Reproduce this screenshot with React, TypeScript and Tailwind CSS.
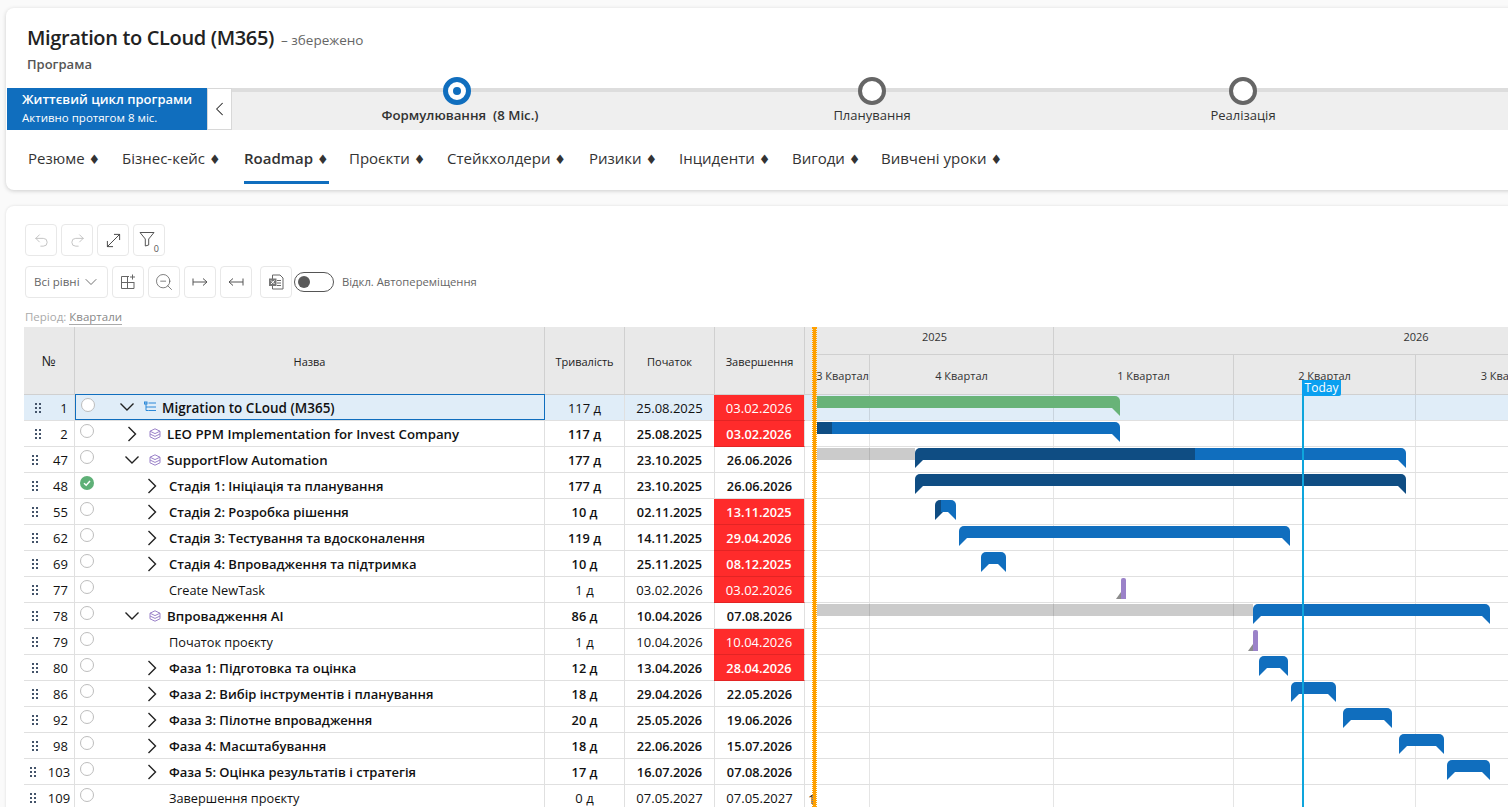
import React from 'react';
import { Undo2, Redo2, MoveDiagonal, ZoomOut, ChevronDown, ChevronLeft } from 'lucide-react';

type Seg = { from: number; to: number; color: string };
type Row = {
  id: number;
  name: string;
  level: 0 | 1 | 2;
  chevron?: 'down' | 'right';
  icon?: 'tree' | 'stack';
  bold: boolean;
  dur: string;
  start: string;
  end: string;
  late?: boolean;
  done?: boolean;
  gray?: [number, number];
  segs?: Seg[];
  cutLeft?: boolean;
  milestone?: number;
};

const BLUE = '#106ebe';
const DARK = '#0f4d83';
const GREEN = '#68b378';
const GANTT_X = 816;

const rows: Row[] = [
  { id: 1, name: 'Migration to CLoud (M365)', level: 0, chevron: 'down', icon: 'tree', bold: false, dur: '117 д', start: '25.08.2025', end: '03.02.2026', late: true, cutLeft: true, segs: [{ from: 817, to: 1120, color: GREEN }] },
  { id: 2, name: 'LEO PPM Implementation for Invest Company', level: 1, chevron: 'right', icon: 'stack', bold: true, dur: '117 д', start: '25.08.2025', end: '03.02.2026', late: true, cutLeft: true, segs: [{ from: 817, to: 832, color: DARK }, { from: 832, to: 1120, color: BLUE }] },
  { id: 47, name: 'SupportFlow Automation', level: 1, chevron: 'down', icon: 'stack', bold: true, dur: '177 д', start: '23.10.2025', end: '26.06.2026', gray: [817, 915], segs: [{ from: 915, to: 1195, color: DARK }, { from: 1195, to: 1406, color: BLUE }] },
  { id: 48, name: 'Стадія 1: Ініціація та планування', level: 2, chevron: 'right', bold: true, dur: '177 д', start: '23.10.2025', end: '26.06.2026', done: true, segs: [{ from: 915, to: 1406, color: DARK }] },
  { id: 55, name: 'Стадія 2: Розробка рішення', level: 2, chevron: 'right', bold: true, dur: '10 д', start: '02.11.2025', end: '13.11.2025', late: true, segs: [{ from: 935, to: 941, color: DARK }, { from: 941, to: 956, color: BLUE }] },
  { id: 62, name: 'Стадія 3: Тестування та вдосконалення', level: 2, chevron: 'right', bold: true, dur: '119 д', start: '14.11.2025', end: '29.04.2026', late: true, segs: [{ from: 959, to: 1290, color: BLUE }] },
  { id: 69, name: 'Стадія 4: Впровадження та підтримка', level: 2, chevron: 'right', bold: true, dur: '10 д', start: '25.11.2025', end: '08.12.2025', late: true, segs: [{ from: 981, to: 1006, color: BLUE }] },
  { id: 77, name: 'Create NewTask', level: 2, bold: false, dur: '1 д', start: '03.02.2026', end: '03.02.2026', late: true, milestone: 1121 },
  { id: 78, name: 'Впровадження AI', level: 1, chevron: 'down', icon: 'stack', bold: true, dur: '86 д', start: '10.04.2026', end: '07.08.2026', gray: [817, 1253], segs: [{ from: 1253, to: 1490, color: BLUE }] },
  { id: 79, name: 'Початок проєкту', level: 2, bold: false, dur: '1 д', start: '10.04.2026', end: '10.04.2026', late: true, milestone: 1253 },
  { id: 80, name: 'Фаза 1: Підготовка та оцінка', level: 2, chevron: 'right', bold: true, dur: '12 д', start: '13.04.2026', end: '28.04.2026', late: true, segs: [{ from: 1259, to: 1288, color: BLUE }] },
  { id: 86, name: 'Фаза 2: Вибір інструментів і планування', level: 2, chevron: 'right', bold: true, dur: '18 д', start: '29.04.2026', end: '22.05.2026', segs: [{ from: 1291, to: 1336, color: BLUE }] },
  { id: 92, name: 'Фаза 3: Пілотне впровадження', level: 2, chevron: 'right', bold: true, dur: '20 д', start: '25.05.2026', end: '19.06.2026', segs: [{ from: 1343, to: 1392, color: BLUE }] },
  { id: 98, name: 'Фаза 4: Масштабування', level: 2, chevron: 'right', bold: true, dur: '18 д', start: '22.06.2026', end: '15.07.2026', segs: [{ from: 1399, to: 1444, color: BLUE }] },
  { id: 103, name: 'Фаза 5: Оцінка результатів і стратегія', level: 2, chevron: 'right', bold: true, dur: '17 д', start: '16.07.2026', end: '07.08.2026', segs: [{ from: 1447, to: 1490, color: BLUE }] },
  { id: 109, name: 'Завершення проєкту', level: 2, bold: false, dur: '0 д', start: '07.05.2027', end: '07.05.2027' },
];

const tabs = [
  { label: 'Резюме', w: 'w-[94px]' },
  { label: 'Бізнес-кейс', w: 'w-[122px]' },
  { label: 'Roadmap', w: 'w-[105px]', active: true },
  { label: 'Проєкти', w: 'w-[98px]' },
  { label: 'Стейкхолдери', w: 'w-[142px]' },
  { label: 'Ризики', w: 'w-[90px]' },
  { label: 'Інциденти', w: 'w-[113px]' },
  { label: 'Вигоди', w: 'w-[89px]' },
  { label: 'Вивчені уроки', w: 'w-[130px]' },
];

const gridLines = [869, 1053, 1233, 1415];

const ToolButton = ({ children, className = '' }: { children: React.ReactNode; className?: string }) => (
  <div className={`w-8 h-8 flex items-center justify-center border border-[#e8e8e8] rounded bg-white ${className}`}>{children}</div>
);

const Grip = () => (
  <svg width="6" height="10" viewBox="0 0 6 10" className="shrink-0">
    {[0, 4, 8].map(y => (
      <g key={y}>
        <rect x="0" y={y} width="2" height="2" fill="#44546a" />
        <rect x="4" y={y} width="2" height="2" fill="#44546a" />
      </g>
    ))}
  </svg>
);

const Chevron = ({ dir }: { dir: 'down' | 'right' }) => (
  <svg width="16" height="16" viewBox="0 0 16 16" fill="none" stroke="#222" strokeWidth="1.4">
    {dir === 'down' ? <polyline points="1.5,4.5 8,11 14.5,4.5" /> : <polyline points="4.5,1 11.5,8 4.5,15" />}
  </svg>
);

const StackIcon = () => (
  <svg width="12" height="12" viewBox="0 0 12 12" fill="none" stroke="#9b82c9" strokeWidth="1" className="shrink-0">
    <path d="M6 .8 11 3.2 6 5.6 1 3.2Z" />
    <path d="M1 3.2V8.8L6 11.2 11 8.8V3.2" />
    <path d="M1 6 6 8.4 11 6" />
  </svg>
);

const TreeIcon = () => (
  <svg width="12" height="12" viewBox="0 0 12 12" fill="none" stroke="#2b88d8" strokeWidth="1" className="shrink-0">
    <rect x="0.5" y="1" width="2.5" height="2" fill="#9cc7ec" />
    <path d="M2 3V9.5H4.5M2 6H4.5M4.5 2H12M4.5 6H12M4.5 9.5H12" />
  </svg>
);

const Status = ({ done }: { done?: boolean }) =>
  done ? (
    <div className="w-[14px] h-[14px] mb-[5px] ml-[5px] rounded-full bg-[#5fb077] flex items-center justify-center shrink-0">
      <svg width="10" height="10" viewBox="0 0 10 10" fill="none" stroke="#fff" strokeWidth="1.5">
        <polyline points="2,5.2 4.2,7.2 8,3" />
      </svg>
    </div>
  ) : (
    <div className="w-[14px] h-[14px] mb-[5px] ml-[5px] rounded-full border border-[#bdbdbd] bg-white shrink-0" />
  );

const Bar = ({ segs, cutLeft }: { segs: Seg[]; cutLeft?: boolean }) => {
  const from = segs[0].from;
  const to = segs[segs.length - 1].to;
  return (
    <div className="absolute top-[1px] h-5" style={{ left: from - GANTT_X, width: to - from }}>
      <div className={`flex h-3 overflow-hidden ${cutLeft ? 'rounded-tr-[5px]' : 'rounded-t-[5px]'}`}>
        {segs.map(s => (
          <div key={s.from} style={{ width: s.to - s.from, backgroundColor: s.color }} />
        ))}
      </div>
      {!cutLeft && (
        <div className="absolute left-0 top-3 w-2 h-2 [clip-path:polygon(0_0,100%_0,0_100%)]" style={{ backgroundColor: segs[0].color }} />
      )}
      <div className="absolute right-0 top-3 w-2 h-2 [clip-path:polygon(0_0,100%_0,100%_100%)]" style={{ backgroundColor: segs[segs.length - 1].color }} />
    </div>
  );
};

const Milestone = ({ x }: { x: number }) => (
  <div className="absolute top-[1px] h-[21px] w-[5px] rounded-t-[2px] bg-[#9b82c9]" style={{ left: x - GANTT_X }}>
    <div className="absolute right-full bottom-0 w-[5px] h-[7px] bg-[#8c8c8c] [clip-path:polygon(100%_0,100%_100%,0_100%)]" />
  </div>
);

const TableRow = ({ row, index }: { row: Row; index: number }) => {
  const selected = index === 0;
  const digits = String(row.id).length;
  const weight = row.bold ? 'font-semibold text-[12.75px]' : 'font-normal';
  const spacer = row.level === 0 ? 24 : row.level === 1 ? 30 : 50;
  const cellBg = selected ? 'bg-[#e0edf8]' : 'bg-white';
  let nameSize = 'text-[12.75px]';
  if (selected) nameSize = 'text-[13.5px] font-semibold';
  else if (row.bold) nameSize = row.level === 1 ? 'text-[13.25px] font-semibold' : 'text-[13px] font-semibold';
  return (
    <div className={`flex h-[26px] border-b border-[#e0e0e0] text-[13px] text-[#111] ${cellBg}`}>
      <div className={`w-[51px] shrink-0 flex items-center justify-center border-r border-[#e0e0e0] ${digits === 1 ? 'gap-[19px] pl-[5px]' : digits === 2 ? 'gap-[15px] pl-[2px]' : 'gap-[12px] pl-[2px]'}`}>
        <Grip />
        <span className="pt-[2px]">{row.id}</span>
      </div>
      <div className={`w-[470px] shrink-0 flex items-center border-r ${selected ? 'border border-[#106ebe] -mt-px' : 'border-[#e0e0e0]'}`}>
        <Status done={row.done} />
        <div className="shrink-0" style={{ width: spacer }} />
        <div className="w-4 h-4 shrink-0">{row.chevron && <Chevron dir={row.chevron} />}</div>
        <div className="ml-[9px] flex items-center gap-[6px] whitespace-nowrap">
          {row.icon === 'tree' && <TreeIcon />}
          {row.icon === 'stack' && <StackIcon />}
          <span className={`pt-[2px] ${nameSize}`}>{row.name}</span>
        </div>
      </div>
      <div className={`w-[80px] shrink-0 flex items-center justify-center border-r border-[#e0e0e0] pt-[2px] ${weight}`}>{row.dur}</div>
      <div className={`w-[90px] shrink-0 flex items-center justify-center border-r border-[#e0e0e0] pt-[2px] ${weight}`}>{row.start}</div>
      <div className={`w-[90px] shrink-0 flex items-center justify-center border-r border-[#e0e0e0] pt-[2px] ${weight} ${row.late ? '-ml-px w-[91px] -mb-px border-b border-b-[#e32424] bg-[#ff2b2b] text-white' : ''}`}>{row.end}</div>
      <div className="w-[11px] shrink-0 pl-[3px] leading-[28px] overflow-hidden">{row.id === 109 ? '1' : ''}</div>
    </div>
  );
};

const GanttRow = ({ row, index }: { row: Row; index: number }) => (
  <div className={`relative h-[26px] border-b border-[#e0e0e0] ${index === 0 ? 'bg-[#e0edf8]' : 'bg-white'}`}>
    {row.gray && (
      <div className="absolute top-[1px] h-3 bg-[#cbcbcb]" style={{ left: row.gray[0] - GANTT_X, width: row.gray[1] - row.gray[0] }} />
    )}
    {gridLines.map(x => (
      <div key={x} className="absolute top-0 bottom-0 w-px bg-black/10" style={{ left: x - GANTT_X }} />
    ))}
    {row.segs && <Bar segs={row.segs} cutLeft={row.cutLeft} />}
    {row.milestone && <Milestone x={row.milestone} />}
  </div>
);

export default function App() {
  return (
    <div className="h-[807px] w-[1508px] overflow-hidden bg-[#fafafa] pl-[6px] pt-2 font-['Open_Sans',sans-serif] text-[#222]">
      <div className="w-[1560px] h-[182px] bg-white rounded-lg shadow-[0_1px_4px_rgba(0,0,0,0.18)]">
        <div className="pl-[21px] pt-[16px] h-[80px]">
          <div className="flex items-baseline h-[27px]">
            <span className="text-[20px] font-semibold text-[#222] tracking-[-0.35px] leading-[27px]">Migration to CLoud (M365)</span>
            <span className="ml-[7px] text-[13.5px] text-[#666]">– збережено</span>
          </div>
          <div className="mt-[4px] text-[13px] font-semibold text-[#555]">Програма</div>
        </div>
        <div className="flex h-[42px] ml-px">
          <div className="w-[200px] shrink-0 bg-[#106ebe] text-white pl-[15px] pt-[2px]">
            <div className="text-[13px] font-semibold leading-[18px]">Життєвий цикл програми</div>
            <div className="text-[11.5px] leading-[15px] mt-[2px]">Активно протягом 8 міс.</div>
          </div>
          <div className="w-[25px] shrink-0 bg-white border border-[#d8d8d8] flex items-center justify-center">
            <ChevronLeft size={26} strokeWidth={1.1} color="#222" />
          </div>
          <div className="flex-1 flex bg-[#efefef] border-t-4 border-[#dddddd]">
            <div className="w-[450px] flex flex-col items-center">
              <div className="-mt-[15px] w-7 h-7 rounded-full border-[5px] border-[#106ebe] bg-white flex items-center justify-center">
                <div className="w-2 h-2 rounded-full bg-[#106ebe]" />
              </div>
              <div className="mt-[1px] pl-[6px] text-[13.25px] font-semibold text-[#333] whitespace-pre">Формулювання  (8 Міс.)</div>
            </div>
            <div className="w-[380px] flex flex-col items-center">
              <div className="-mt-[15px] w-7 h-7 rounded-full border-4 border-[#666] bg-white" />
              <div className="mt-[1px] text-[13px] text-[#333]">Планування</div>
            </div>
            <div className="w-[362px] flex flex-col items-center">
              <div className="-mt-[15px] w-7 h-7 rounded-full border-4 border-[#666] bg-white" />
              <div className="mt-[1px] text-[13px] text-[#333]">Реалізація</div>
            </div>
          </div>
        </div>
        <div className="flex pl-[22px] h-[52px] text-[15px] text-[#333]">
          {tabs.map(t => (
            <div key={t.label} className={`${t.w} shrink-0 pt-[17px] whitespace-nowrap`}>
              <span className={`inline-block h-[37px] ${t.active ? 'font-semibold border-b-[3px] border-[#106ebe]' : ''}`}>
                {t.label} <span className="text-[13px] font-['DejaVu_Sans',sans-serif]">♦</span>
              </span>
            </div>
          ))}
        </div>
      </div>

      <div className="mt-4 w-[1560px] h-[700px] bg-white rounded-lg shadow-[0_0_3px_rgba(0,0,0,0.12)]">
        <div className="pl-[19px] pt-[18px] flex flex-col gap-[10px] h-[121px]">
          <div className="flex gap-1">
            <ToolButton><Undo2 size={17} strokeWidth={1.2} color="#bbb" /></ToolButton>
            <ToolButton><Redo2 size={17} strokeWidth={1.2} color="#bbb" /></ToolButton>
            <ToolButton><MoveDiagonal size={21} strokeWidth={1.1} color="#444" /></ToolButton>
            <ToolButton className="relative">
              <svg width="16" height="16" viewBox="0 0 16 16" fill="none" stroke="#555" strokeWidth="1" className="-mt-[3px] -ml-1">
                <path d="M1 1.5H15L9.7 8V14L6.3 15V8Z" />
              </svg>
              <span className="absolute right-[5px] bottom-[2px] text-[9px] leading-none text-[#555]">0</span>
            </ToolButton>
          </div>
          <div className="flex items-center">
            <div className="w-[83px] h-8 flex items-center justify-between pl-2 pr-[6px] border border-[#e8e8e8] rounded text-[11.5px] text-[#666]">
              Всі рівні
              <ChevronDown size={20} strokeWidth={1} color="#555" />
            </div>
            <ToolButton className="ml-1">
              <svg width="16" height="16" viewBox="0 0 16 16" fill="none" stroke="#666" strokeWidth="1">
                <path d="M9 2.5H1.5V14.5H14V8M1.5 8.5H14M7.5 2.5V14.5M12.5 .5V5.5M10 3H15" />
              </svg>
            </ToolButton>
            <ToolButton className="ml-1"><ZoomOut size={20} strokeWidth={0.9} color="#555" /></ToolButton>
            <ToolButton className="ml-1">
              <svg width="16" height="16" viewBox="0 0 16 16" fill="none" stroke="#555" strokeWidth="1">
                <path d="M1 4.5V11.5M1 8H15M11 4.5 15 8 11 11.5" />
              </svg>
            </ToolButton>
            <ToolButton className="ml-1">
              <svg width="16" height="16" viewBox="0 0 16 16" fill="none" stroke="#555" strokeWidth="1">
                <path d="M15 4.5V11.5M15 8H1M5 4.5 1 8 5 11.5" />
              </svg>
            </ToolButton>
            <ToolButton className="ml-2">
              <svg width="16" height="16" viewBox="0 0 16 16" fill="none">
                <path d="M4.5 1H12L15 4V15H4.5Z" fill="#fff" stroke="#666" />
                <path d="M9 6.5H13M9 9H13M9 11.5H13" stroke="#666" />
                <rect x="1" y="4.5" width="7.5" height="7.5" fill="#777" />
                <path d="M3 6.5 6.5 10M6.5 6.5 3 10" stroke="#fff" />
              </svg>
            </ToolButton>
            <div className="ml-[2px] w-10 h-5 rounded-full border border-[#555] flex items-center pl-[3px]">
              <div className="w-3 h-3 rounded-full bg-[#5a5a5a]" />
            </div>
            <span className="ml-2 text-[11.25px] text-[#666] whitespace-nowrap">Відкл. Автопереміщення</span>
          </div>
          <div className="text-[11.5px] text-[#aaa] leading-[14px] mt-[2px]">
            Період: <span className="text-[#888] border-b border-[#aaa]">Квартали</span>
          </div>
        </div>

        <div className="relative ml-[18px] flex">
          <div className="w-[792px] shrink-0">
            <div className="flex h-[68px] bg-[#e9e9e9] border-b border-[#d0d0d0] text-[#222] text-[11px]">
              <div className="w-[51px] flex items-center justify-center border-r border-[#d0d0d0] text-[14px]">№</div>
              <div className="w-[470px] flex items-center justify-center border-r border-[#d0d0d0] pt-[3px]">Назва</div>
              <div className="w-[80px] flex items-center justify-center border-r border-[#d0d0d0] pt-[3px]">Тривалість</div>
              <div className="w-[90px] flex items-center justify-center border-r border-[#d0d0d0] pt-[3px]">Початок</div>
              <div className="w-[90px] flex items-center justify-center border-r border-[#d0d0d0] pt-[3px]">Завершення</div>
              <div className="w-[11px]" />
            </div>
            {rows.map((r, i) => (
              <TableRow key={r.id} row={r} index={i} />
            ))}
          </div>
          <div className="flex-1 min-w-0">
            <div className="h-[68px] bg-[#e9e9e9] border-b border-[#d0d0d0] text-[#333] text-[11px] overflow-hidden">
              <div className="flex h-[28px] border-b border-[#d0d0d0]">
                <div className="w-[238px] shrink-0 flex items-center justify-center border-r border-[#d0d0d0] pb-[6px]">2025</div>
                <div className="w-[726px] shrink-0 flex items-center justify-center pb-[6px] pr-[2px]">2026</div>
              </div>
              <div className="flex h-[39px]">
                <div className="w-[54px] shrink-0 flex items-center justify-center border-r border-[#d0d0d0] whitespace-nowrap overflow-hidden pt-[3px]">3 Квартал</div>
                <div className="w-[184px] shrink-0 flex items-center justify-center border-r border-[#d0d0d0] pt-[3px]">4 Квартал</div>
                <div className="w-[180px] shrink-0 flex items-center justify-center border-r border-[#d0d0d0] pt-[3px]">1 Квартал</div>
                <div className="w-[182px] shrink-0 flex items-center justify-center border-r border-[#d0d0d0] pt-[3px]">2 Квартал</div>
                <div className="w-[182px] shrink-0 flex items-center justify-center pt-[3px]">3 Квартал</div>
              </div>
            </div>
            {rows.map((r, i) => (
              <GanttRow key={r.id} row={r} index={i} />
            ))}
          </div>
          {/* splitter + today marker lie over the chart */}
          <div className="absolute top-0 bottom-0 left-[788px] w-[5px] bg-[#ffa000] bg-clip-padding border-x border-dotted border-[#ffa000]" />
          <div className="absolute top-[53px] bottom-0 left-[1278px] w-[2px] bg-[#0ea5dc]" />
          <div className="absolute top-[53px] left-[1278px] h-4 w-[39px] bg-[#0aa0f0] text-white text-[12px] leading-4 text-center rounded-b-[2px]">Today</div>
        </div>
      </div>
    </div>
  );
}
